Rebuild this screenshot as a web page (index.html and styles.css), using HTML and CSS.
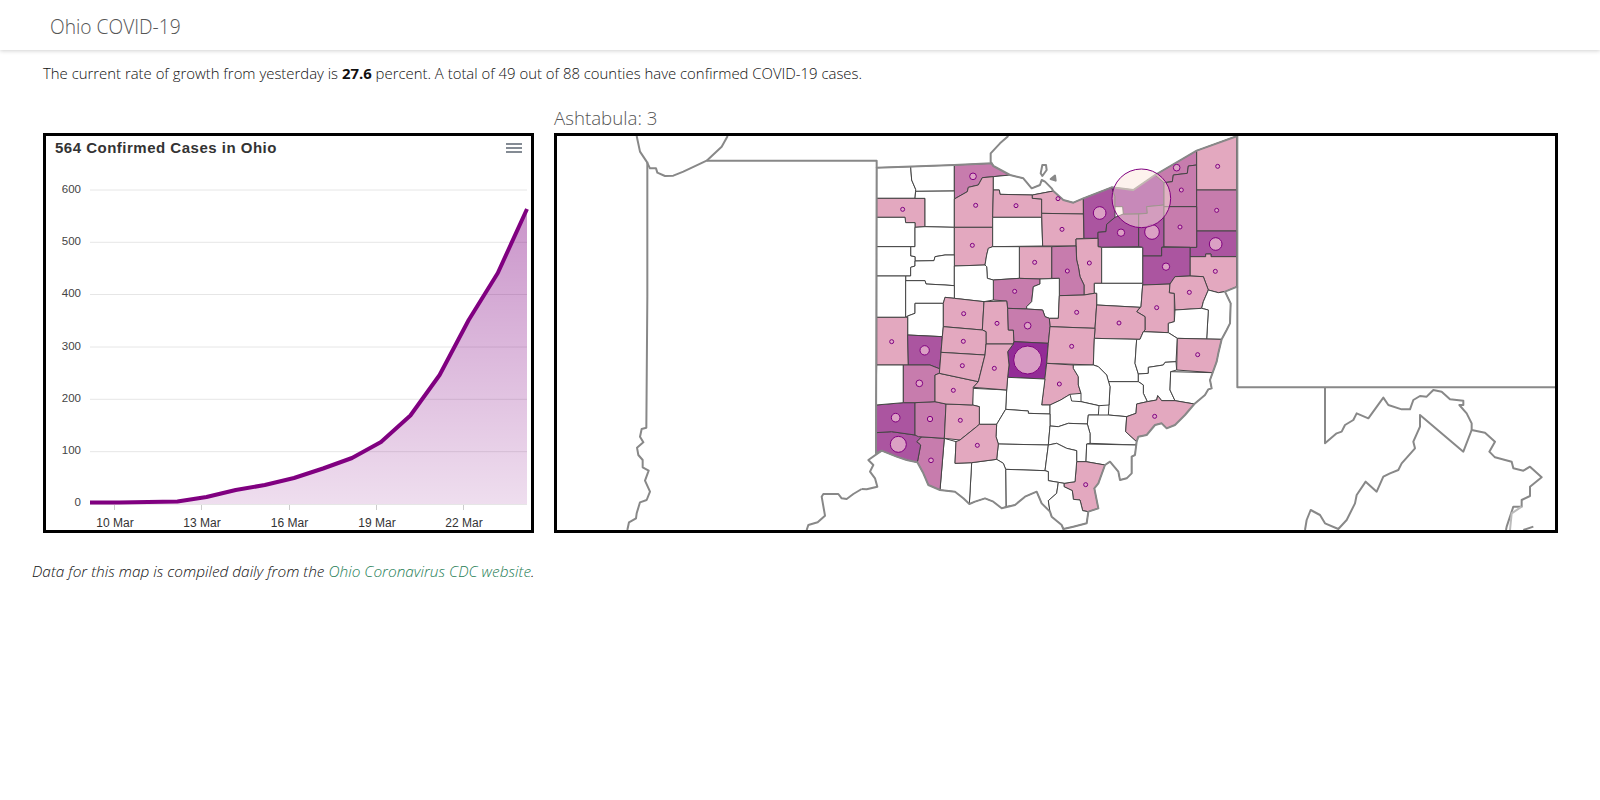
FILE: index.html
```html
<!DOCTYPE html>
<html lang="en">
<head>
<meta charset="utf-8">
<title>Ohio COVID-19</title>
<link rel="stylesheet" href="styles.css">
</head>
<body>
<header class="topbar"><span class="brand">Ohio COVID-19</span></header>
<p class="intro">The current rate of growth from yesterday is <strong>27.6</strong> percent. A total of 49 out of 88 counties have confirmed COVID-19 cases.</p>
<div class="panels">
  <div class="chart-col">
    <div class="chart-box">
      <svg class="chart" viewBox="46 136 485 394" xmlns="http://www.w3.org/2000/svg">
        <defs>
          <linearGradient id="areaFill" gradientUnits="userSpaceOnUse" x1="0" y1="208" x2="0" y2="504">
            <stop offset="0" class="stop-top"/>
            <stop offset="1" class="stop-bottom"/>
          </linearGradient>
        </defs>
        <text class="chart-title" x="55" y="153">564 Confirmed Cases in Ohio</text>
        <g class="menu-lines">
          <line x1="506" y1="144" x2="522" y2="144"/>
          <line x1="506" y1="148" x2="522" y2="148"/>
          <line x1="506" y1="152" x2="522" y2="152"/>
        </g>
        <g class="grid">
          <line x1="90" y1="190" x2="527" y2="190"/>
          <line x1="90" y1="242.3" x2="527" y2="242.3"/>
          <line x1="90" y1="294.5" x2="527" y2="294.5"/>
          <line x1="90" y1="347" x2="527" y2="347"/>
          <line x1="90" y1="399.3" x2="527" y2="399.3"/>
          <line x1="90" y1="451.7" x2="527" y2="451.7"/>
          <line x1="90" y1="504.5" x2="527" y2="504.5"/>
        </g>
        <g class="ticks">
          <line x1="114.5" y1="505" x2="114.5" y2="510"/>
          <line x1="201.5" y1="505" x2="201.5" y2="510"/>
          <line x1="289.5" y1="505" x2="289.5" y2="510"/>
          <line x1="376.5" y1="505" x2="376.5" y2="510"/>
          <line x1="463.5" y1="505" x2="463.5" y2="510"/>
        </g>
        <polygon class="area" points="90,502.4 119,502.4 148,502 177.4,501.4 206.5,497 235.7,490 264.8,485 294,478 323,468.5 352,458 381,442 410.4,415.5 439.6,375 468.7,320 497.8,273 527,209 527,504 90,504"/>
        <polyline class="series" points="90,502.4 119,502.4 148,502 177.4,501.4 206.5,497 235.7,490 264.8,485 294,478 323,468.5 352,458 381,442 410.4,415.5 439.6,375 468.7,320 497.8,273 527,209"/>
        <g class="y-labels">
          <text x="81" y="193">600</text>
          <text x="81" y="245">500</text>
          <text x="81" y="297">400</text>
          <text x="81" y="350">300</text>
          <text x="81" y="402">200</text>
          <text x="81" y="454">100</text>
          <text x="81" y="506">0</text>
        </g>
        <g class="x-labels">
          <text x="115" y="527">10 Mar</text>
          <text x="202" y="527">13 Mar</text>
          <text x="289.500" y="527">16 Mar</text>
          <text x="377" y="527">19 Mar</text>
          <text x="464" y="527">22 Mar</text>
        </g>
      </svg>
    </div>
  </div>
  <div class="map-col">
    <div class="map-title">Ashtabula: 3</div>
    <div class="map-box">
      <svg class="map" viewBox="-909 18 2994 1182" xmlns="http://www.w3.org/2000/svg">
        <g class="counties">
          <polygon class="c0" points="50,113 152,110 155,150 167,178 165,205 50,205"/>
          <polygon class="c0" points="152,110 283,105 283,183 167,184 167,178 155,150"/>
          <polygon class="c2" points="283,105 395,100 400,108 450,135 400,140 367,143 355,165 325,172 322,185 283,207"/>
          <polygon class="c1" points="50,205 195,205 195,290 165,292 165,278 137,278 135,262 50,262"/>
          <polygon class="c0" points="167,184 283,183 283,207 283,292 195,290 195,205 165,205"/>
          <polygon class="c1" points="283,207 322,185 325,172 355,165 367,143 400,140 400,180 398,262 398,292 283,292"/>
          <polygon class="c0" points="400,140 450,135 490,145 515,175 540,165 545,150 555,155 575,175 580,183 517,195 420,193 418,180 400,180"/>
          <polygon class="c1" points="400,180 418,180 420,193 517,195 517,205 545,207 545,262 398,262"/>
          <polygon class="c1" points="517,195 580,183 610,210 640,218 670,205 670,252 545,250 545,207 517,205"/>
          <polygon class="c0" points="50,262 135,262 137,278 165,278 165,350 50,350"/>
          <polygon class="c0" points="165,292 195,290 283,292 283,375 255,375 225,380 222,392 165,393 165,380 152,378 152,350 165,350"/>
          <polygon class="c1" points="283,292 398,292 398,350 385,355 380,375 375,405 283,408"/>
          <polygon class="c0" points="398,262 545,262 548,348 398,350"/>
          <polygon class="c1" points="545,250 670,252 672,325 648,327 648,348 548,348"/>
          <polygon class="c3" points="670,205 755,172 765,200 765,262 740,283 738,305 714,307 714,325 672,325"/>
          <polygon class="c3" points="765,262 790,252 836,252 836,350 725,352 714,350 714,307 738,305 740,283"/>
          <polygon class="c4" points="755,172 820,180 885,135 912,158 912,225 860,230 862,250 790,252 788,230 765,230 765,200"/>
          <polygon class="c3" points="836,252 862,250 860,230 912,225 912,350 905,352 905,378 848,378 848,352 836,350"/>
          <polygon class="c2" points="885,135 1010,62 1010,105 985,108 982,130 940,135 937,155 912,158"/>
          <polygon class="c2" points="912,158 937,155 940,135 982,130 985,108 1010,105 1010,230 912,230"/>
          <polygon class="c1" points="1010,62 1130,18 1130,180 1010,180"/>
          <polygon class="c2" points="1010,180 1130,180 1130,303 1010,303"/>
          <polygon class="c3" points="1010,303 1130,303 1130,380 1053,380 1053,372 1037,372 1037,380 990,380 990,352 1010,352"/>
          <polygon class="c2" points="912,230 1010,230 1010,352 990,352 912,350"/>
          <polygon class="c1" points="990,380 1037,380 1037,372 1053,372 1053,380 1130,380 1130,470 1095,485 1075,488 1045,480 1030,440 990,438"/>
          <polygon class="c3" points="848,378 905,378 905,352 990,352 990,438 945,440 930,462 848,465"/>
          <polygon class="c1" points="648,327 714,325 714,350 725,352 725,460 703,460 703,490 672,495 672,465 660,440 655,410 650,390"/>
          <polygon class="c2" points="575,350 648,348 650,390 655,410 660,440 672,465 672,495 598,497 598,445 575,445"/>
          <polygon class="c1" points="478,350 575,350 575,445 540,447 478,445"/>
          <polygon class="c0" points="398,350 478,350 478,445 400,450 382,445 380,410 375,405 380,375 385,355"/>
          <polygon class="c0" points="725,352 848,352 848,460 725,460"/>
          <polygon class="c0" points="703,460 848,460 848,465 843,530 840,532 710,525 710,490 703,490"/>
          <polygon class="c1" points="848,465 930,462 928,488 943,490 943,575 925,580 925,608 850,605 855,600 855,560 830,545 843,530"/>
          <polygon class="c1" points="930,462 945,440 990,438 1030,440 1045,480 1030,515 1025,535 945,540 943,490 928,488"/>
          <polygon class="c0" points="1030,515 1045,480 1075,488 1095,485 1112,520 1110,580 1100,600 1085,628 1040,627 1045,540 1025,535"/>
          <polygon class="c0" points="925,580 943,575 945,540 1025,535 1045,540 1040,627 952,625 925,608"/>
          <polygon class="c2" points="400,450 478,445 540,447 540,462 520,470 515,515 500,530 500,537 443,535 440,513 400,510"/>
          <polygon class="c0" points="540,447 598,445 598,497 595,565 568,565 555,560 548,540 500,537 500,530 515,515 520,470 540,462"/>
          <polygon class="c1" points="598,497 672,495 703,490 710,490 710,525 705,595 570,590 568,565 595,565"/>
          <polygon class="c1" points="710,525 840,532 830,545 855,560 855,600 850,605 840,628 703,625 705,595"/>
          <polygon class="c0" points="50,350 152,350 152,378 165,380 165,408 152,412 152,438 50,438"/>
          <polygon class="c0" points="165,393 222,392 225,380 255,375 283,375 283,467 255,465 198,462 195,452 137,452 137,438 152,438 152,412 165,408"/>
          <polygon class="c0" points="283,408 375,405 380,410 382,445 400,450 400,510 372,515 283,505"/>
          <polygon class="c0" points="50,438 137,438 137,562 50,562"/>
          <polygon class="c0" points="137,452 195,452 198,462 255,465 283,467 283,505 255,502 250,520 165,520 165,550 143,558 137,562"/>
          <polygon class="c0" points="165,520 250,520 250,590 247,620 143,615 143,558 165,550"/>
          <polygon class="c1" points="255,502 283,505 372,515 367,600 250,590 250,520"/>
          <polygon class="c1" points="372,515 440,513 443,535 445,600 460,600 462,635 460,642 378,642 378,605 367,600"/>
          <polygon class="c2" points="443,535 500,537 548,540 555,560 568,565 570,590 565,640 462,635 460,600 445,600"/>
        </g>
        <g class="counties" transform="translate(0 600)">
          <polygon class="c1" points="50,-38 137,-38 143,-38 143,15 145,105 50,105"/>
          <polygon class="c3" points="143,15 247,20 243,67 238,130 243,118 210,105 145,105"/>
          <polygon class="c1" points="250,-10 367,0 378,5 378,42 375,75 243,67 247,20"/>
          <polygon class="c4" points="462,35 565,40 555,147 443,142 447,105 443,65 460,42"/>
          <polygon class="c1" points="570,-10 705,-5 703,25 700,105 560,100 565,40"/>
          <polygon class="c0" points="703,25 830,28 825,100 835,132 835,155 745,155 740,135 715,110 700,105"/>
          <polygon class="c0" points="850,5 925,8 952,25 948,95 915,97 910,105 865,112 865,130 835,132 825,100 830,28 840,28"/>
          <polygon class="c1" points="952,25 1085,28 1075,70 1070,95 1058,128 950,120"/>
          <polygon class="c0" points="835,132 865,130 865,112 910,105 915,97 948,95 950,120 932,125 930,180 945,212 905,212 893,197 890,210 862,215 850,190 850,165 835,155"/>
          <polygon class="c0" points="932,125 1058,128 1050,150 1055,175 1045,178 1035,195 1003,222 945,212 930,180"/>
          <polygon class="c0" points="745,155 835,155 850,165 850,190 862,215 830,222 828,250 800,260 745,255 747,225 750,170"/>
          <polygon class="c1" points="560,100 640,105 640,115 655,140 655,165 663,190 630,193 602,210 570,225 545,225"/>
          <polygon class="c0" points="640,105 700,105 715,110 740,135 750,170 747,225 717,227 663,215 663,190 655,165 655,140 640,115"/>
          <polygon class="c0" points="443,142 555,147 545,225 570,225 570,252 505,250 505,243 437,238 440,180"/>
          <polygon class="c0" points="338,175 440,180 437,238 410,283 358,283 358,230 338,225"/>
          <polygon class="c0" points="570,225 602,210 630,193 635,213 663,215 717,227 715,255 685,255 682,282 625,280 595,290 570,288"/>
          <polygon class="c0" points="685,255 745,255 800,260 797,305 830,335 828,345 690,340 690,310 682,282"/>
          <polygon class="c1" points="830,222 862,215 890,210 893,197 905,212 945,212 1003,222 975,255 945,285 920,295 905,280 885,285 860,315 835,320 830,335 797,305 800,260 828,250"/>
          <polygon class="c0" points="437,238 505,243 505,250 570,252 570,288 565,345 415,342 408,320 410,283"/>
          <polygon class="c0" points="570,288 595,290 625,280 682,282 690,310 690,340 680,342 678,395 650,395 650,362 620,355 590,340 565,345"/>
          <polygon class="c0" points="680,342 828,345 825,375 815,380 815,430 800,445 780,450 775,425 750,395 735,405 678,395"/>
          <polygon class="c1" points="650,395 678,395 735,405 715,460 703,475 715,535 685,545 668,542 660,510 640,508 637,482 612,470 612,460 645,455"/>
          <polygon class="c0" points="415,342 565,345 555,422 437,418 430,400 410,388"/>
          <polygon class="c0" points="565,345 590,340 620,355 650,362 650,395 645,455 612,460 595,457 565,452 565,425 555,422"/>
          <polygon class="c0" points="437,418 555,422 565,425 565,452 595,457 590,490 565,512 570,545 545,520 530,485 495,500 465,525 438,530"/>
          <polygon class="c0" points="595,457 612,460 612,470 637,482 640,508 660,510 668,542 685,545 680,580 640,590 610,597 605,585 575,560 570,545 565,512 590,490"/>
          <polygon class="c0" points="335,398 410,388 430,400 437,418 438,530 425,535 400,515 375,505 345,515 328,522"/>
          <polygon class="c0" points="253,325 288,335 285,400 335,398 328,522 310,505 285,485 240,480"/>
          <polygon class="c2" points="175,320 253,325 240,480 205,465 190,430 172,397 182,345 170,335 187,318"/>
          <polygon class="c3" points="48,308 95,305 165,315 187,318 170,335 182,345 172,397 140,390 110,380 65,362 48,370"/>
          <polygon class="c3" points="48,225 130,218 165,218 165,315 95,305 48,308"/>
          <polygon class="c2" points="165,218 225,215 258,222 253,325 175,320 165,315"/>
          <polygon class="c1" points="258,222 338,225 358,230 358,283 350,290 300,330 253,325"/>
          <polygon class="c1" points="350,290 358,283 410,283 408,320 415,342 410,388 335,398 285,400 288,335 300,330"/>
          <polygon class="c0" points="50,105 130,105 130,218 48,225"/>
          <polygon class="c2" points="130,105 210,105 243,118 238,130 225,135 225,215 165,218 130,218"/>
          <polygon class="c1" points="238,130 355,155 340,172 338,225 258,222 225,215 225,135"/>
          <polygon class="c1" points="243,67 375,75 355,155 238,130"/>
          <polygon class="c1" points="378,42 460,42 443,65 447,105 443,142 440,180 340,172 355,155 375,75"/>
        </g>
        <g class="borders">
          <polygon points="50,113 283,105 395,100 400,108 450,135 490,145 515,175 540,165 545,150 555,155 575,175 580,183 610,210 640,218 670,205 755,172 820,180 885,135 1010,62 1132,18 1132,470 1095,485 1112,520 1110,580 1100,600 1085,628 1075,670 1070,695 1058,728 1050,750 1055,775 1045,778 1035,795 1003,822 975,855 945,885 920,895 905,880 885,885 860,915 835,920 830,935 825,975 815,980 815,1030 800,1045 780,1050 775,1025 750,995 735,1005 715,1060 703,1075 715,1135 685,1145 680,1180 640,1190 610,1197 605,1185 575,1160 570,1145 545,1120 530,1085 495,1100 465,1125 425,1135 400,1115 375,1105 345,1115 328,1122 310,1105 285,1085 240,1080 205,1065 190,1030 172,997 140,990 110,980 65,962 48,970"/>
          <polyline points="400,108 392,95 392,70 420,40 445,18"/>
          <polyline points="50,113 50,92 -460,92"/>
          <polyline points="65,962 25,990 40,1005 30,1025 45,1045 52,1070 20,1078 5,1077"/>
          <polygon points="547,105 558,105 560,120 547,138 542,130"/>
          <polygon class="islet" points="572,147 585,137 587,152"/>
          <polyline points="1132,470 1132,772 2090,772"/>
          <g transform="translate(-930 0)">
            <polyline points="260,18 270,65 290,95 300,115 318,115 322,128 345,138 370,137 400,125 470,92 515,50 533,18"/>
            <polyline points="292,95 292,500 289,893 275,897 270,920 280,937 261,953 265,975 278,990 278,1012 296,1022 285,1052 300,1085 290,1110 270,1117 260,1150 258,1165 237,1177 232,1200"/>
            <polyline points="935,1077 910,1092 890,1107 875,1105 865,1092 820,1092 815,1100 825,1157 803,1177 775,1185 770,1200"/>
          </g>
          <g transform="translate(1020 0)">
            <polyline points="375,772 375,940 410,910 425,905 435,885 460,870 470,850 505,865 550,803 565,825 605,838 630,838 640,810 660,798 680,800 700,780 725,785 750,808 790,812 790,825 778,825 800,850 815,880 815,900 855,908 885,935 868,965 885,982 935,995 940,1015 970,1022 990,1010 1025,1042 990,1070 990,1098 965,1110 965,1130 940,1130 920,1190 918,1200"/>
            <polyline points="815,900 790,965 660,855 660,890 640,935 645,955 605,1000 595,1020 570,1030 550,1040 530,1085 497,1055 470,1095 465,1120 440,1170 415,1197 375,1180 360,1155 332,1140 320,1170 315,1200"/>
            <polyline class="faint" points="965,1130 935,1150 930,1200"/>
            <polyline points="1000,1190 970,1200"/>
          </g>
        </g>
        <g class="markers">
          <circle cx="339" cy="139" r="10"/>
          <circle cx="128" cy="238" r="6"/>
          <circle cx="347" cy="226" r="6"/>
          <circle cx="468" cy="227" r="6"/>
          <circle cx="594" cy="206" r="6"/>
          <circle cx="606" cy="298" r="6"/>
          <circle cx="337" cy="346" r="6"/>
          <circle cx="719" cy="249" r="19"/>
          <circle cx="783" cy="308" r="11"/>
          <circle cx="876" cy="306" r="22"/>
          <circle cx="950" cy="113" r="10"/>
          <circle cx="964" cy="180" r="6"/>
          <circle cx="1073" cy="109" r="6"/>
          <circle cx="1070" cy="241" r="6"/>
          <circle cx="960" cy="291" r="6"/>
          <circle cx="1067" cy="342" r="19"/>
          <circle cx="918" cy="410" r="11"/>
          <circle cx="1066" cy="424" r="6"/>
          <circle cx="988" cy="487" r="6"/>
          <circle cx="688" cy="399" r="6"/>
          <circle cx="622" cy="423" r="6"/>
          <circle cx="524" cy="397" r="6"/>
          <circle cx="464" cy="484" r="6"/>
          <circle cx="650" cy="547" r="6"/>
          <circle cx="777" cy="579" r="6"/>
          <circle cx="890" cy="533" r="6"/>
          <circle cx="311" cy="551" r="6"/>
          <circle cx="411" cy="580" r="6"/>
          <circle cx="503" cy="587" r="10"/>
          <g transform="translate(0 600)">
            <circle cx="95" cy="35" r="6"/>
            <circle cx="194" cy="61" r="14"/>
            <circle cx="310" cy="34" r="6"/>
            <circle cx="307" cy="107" r="6"/>
            <circle cx="403" cy="115" r="6"/>
            <circle cx="503" cy="90" r="42"/>
            <circle cx="635" cy="49" r="6"/>
            <circle cx="598" cy="162" r="6"/>
            <circle cx="1013" cy="74" r="6"/>
            <circle cx="178" cy="160" r="10"/>
            <circle cx="280" cy="181" r="6"/>
            <circle cx="107" cy="263" r="13"/>
            <circle cx="210" cy="267" r="8"/>
            <circle cx="301" cy="271" r="6"/>
            <circle cx="884" cy="259" r="6"/>
            <circle cx="115" cy="343" r="24"/>
            <circle cx="352" cy="346" r="6"/>
            <circle cx="213" cy="391" r="7"/>
            <circle cx="677" cy="464" r="6"/>
          </g>
        </g>
        <circle class="lens" cx="844" cy="205" r="88"/>
      </svg>
    </div>
  </div>
</div>
<p class="source">Data for this map is compiled daily from the <a class="source-link" href="#">Ohio Coronavirus CDC website</a>.</p>
</body>
</html>
```
FILE: styles.css
```css
* { box-sizing: border-box; }
body {
  margin: 0;
  background: #fff;
  color: #212529;
  font-family: "Open Sans", "Noto Sans", sans-serif;
  font-weight: 300;
}
.topbar {
  height: 50px;
  display: flex;
  align-items: center;
  padding: 3px 0 0 50px;
  box-shadow: 0 1px 4px rgba(0, 0, 0, .18);
}
.brand {
  font-size: 19.2px;
  color: #555;
}
.intro {
  margin: 13px 0 0 43px;
  font-size: 14.9px;
  line-height: 20px;
  color: #111;
}
.intro strong { font-weight: 700; }
.panels {
  display: flex;
  align-items: flex-end;
  margin: 23px 0 0 43px;
  gap: 20px;
}
.chart-box, .map-box {
  border: 3px solid #000;
  height: 400px;
}
.chart-box { width: 491px; }
.map-box { width: 1004px; }
.chart, .map { display: block; width: 100%; height: 100%; }
.map-title {
  font-size: 18.7px;
  line-height: 24px;
  color: #555;
  margin-bottom: 3px;
}
.source {
  margin: 29px 0 0 32px;
  font-size: 15.4px;
  font-style: italic;
  line-height: 20px;
  color: #111;
}
.source-link { color: #1e7d55; text-decoration: none; }

.chart-title {
  font-family: "Liberation Sans", Arial, sans-serif;
  font-weight: 700;
  font-size: 15px;
  letter-spacing: .5px;
  fill: #333;
}
.menu-lines line { stroke: #666e7a; stroke-width: 1.6; }
.grid line { stroke: #e6e6e6; stroke-width: 1; }
.ticks line { stroke: #ccc; stroke-width: 1; }
.area { fill: url(#areaFill); }
.stop-top { stop-color: #800080; stop-opacity: .42; }
.stop-bottom { stop-color: #800080; stop-opacity: .13; }
.series { fill: none; stroke: #800080; stroke-width: 4; stroke-linejoin: round; }
.y-labels text, .x-labels text {
  font-family: "Liberation Sans", Arial, sans-serif;
  font-weight: 400;
}
.y-labels text { font-size: 11.5px; text-anchor: end; fill: #444; }
.x-labels text { font-size: 12px; text-anchor: middle; fill: #333; }

.counties polygon { stroke: #444; stroke-width: 3; stroke-linejoin: round; }
.c0 { fill: #fff; }
.c1 { fill: #e3a8bf; }
.c2 { fill: #c77cad; }
.c3 { fill: #ab55a0; }
.c4 { fill: #932c96; }
.borders polygon, .borders polyline {
  fill: none;
  stroke: #888;
  stroke-width: 6;
  stroke-linejoin: round;
}
.borders .islet { fill: #888; }
.borders .faint { stroke: #bbb; }
.markers circle {
  fill: #e0a8c8;
  fill-opacity: .9;
  stroke: #800080;
  stroke-width: 3;
}
.lens {
  fill: #fbe6dc;
  fill-opacity: .5;
  stroke: #800080;
  stroke-width: 3;
}
```
